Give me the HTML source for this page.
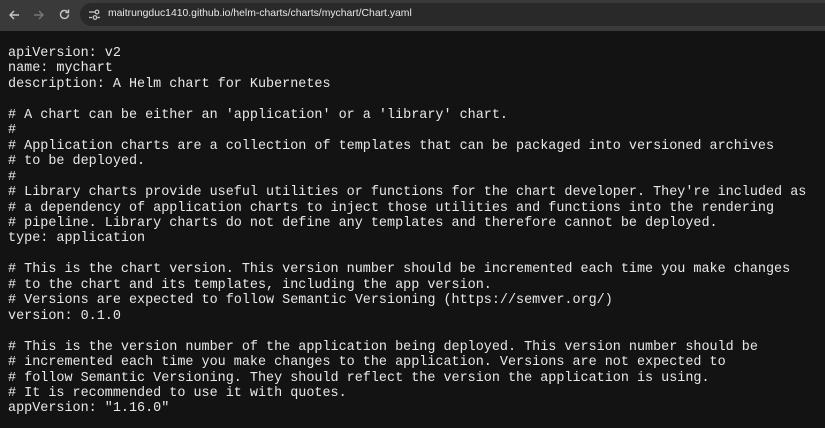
<!DOCTYPE html>
<html><head><style>
html,body{margin:0;padding:0;width:825px;height:428px;overflow:hidden;background:#131313;}
.bar{position:absolute;left:0;top:0;width:825px;height:31px;background:#3a3a3a;}
.pill{position:absolute;left:80px;top:3px;right:0;height:23px;background:#292929;border-radius:12px 0 0 12px;}
.url{position:absolute;left:108px;top:8px;font:10.4px "Liberation Sans",sans-serif;color:#e8e8e8;}
pre{position:absolute;left:8px;top:46px;margin:0;font:13.45px/15.45px "Liberation Mono",monospace;color:#e8e8e8;}
</style></head><body>
<div class="bar"></div><div class="pill"></div>
<svg style="position:absolute;left:8px;top:9px" width="12" height="12" viewBox="0 0 12 12"><path d="M11 6H2M6 2L2 6l4 4" stroke="#c8c8c8" stroke-width="1.4" fill="none"/></svg>
<svg style="position:absolute;left:33px;top:9px" width="12" height="12" viewBox="0 0 12 12"><path d="M1 6h9M6 2l4 4-4 4" stroke="#777" stroke-width="1.4" fill="none"/></svg>
<svg style="position:absolute;left:58px;top:8px" width="13" height="13" viewBox="0 0 13 13"><path d="M10.5 6.5A4 4 0 1 1 9.3 3.6" stroke="#c8c8c8" stroke-width="1.4" fill="none"/><path d="M10.5 1.5v3h-3" stroke="#c8c8c8" stroke-width="1.4" fill="none"/></svg>
<svg style="position:absolute;left:88px;top:9px" width="13" height="12" viewBox="0 0 13 12"><path d="M1 3h6M1 8.5h3" stroke="#c8c8c8" stroke-width="1.3"/><circle cx="9" cy="3" r="1.8" stroke="#c8c8c8" fill="none" stroke-width="1.2"/><circle cx="7" cy="8.5" r="1.8" stroke="#c8c8c8" fill="none" stroke-width="1.2"/><path d="M9.5 8.5H12" stroke="#c8c8c8" stroke-width="1.3"/></svg>
<div class="url">maitrungduc1410.github.io/helm-charts/charts/mychart/Chart.yaml</div>
<pre>apiVersion: v2
name: mychart
description: A Helm chart for Kubernetes

# A chart can be either an 'application' or a 'library' chart.
#
# Application charts are a collection of templates that can be packaged into versioned archives
# to be deployed.
#
# Library charts provide useful utilities or functions for the chart developer. They're included as
# a dependency of application charts to inject those utilities and functions into the rendering
# pipeline. Library charts do not define any templates and therefore cannot be deployed.
type: application

# This is the chart version. This version number should be incremented each time you make changes
# to the chart and its templates, including the app version.
# Versions are expected to follow Semantic Versioning (https://semver.org/)
version: 0.1.0

# This is the version number of the application being deployed. This version number should be
# incremented each time you make changes to the application. Versions are not expected to
# follow Semantic Versioning. They should reflect the version the application is using.
# It is recommended to use it with quotes.
appVersion: "1.16.0"</pre>
</body></html>
